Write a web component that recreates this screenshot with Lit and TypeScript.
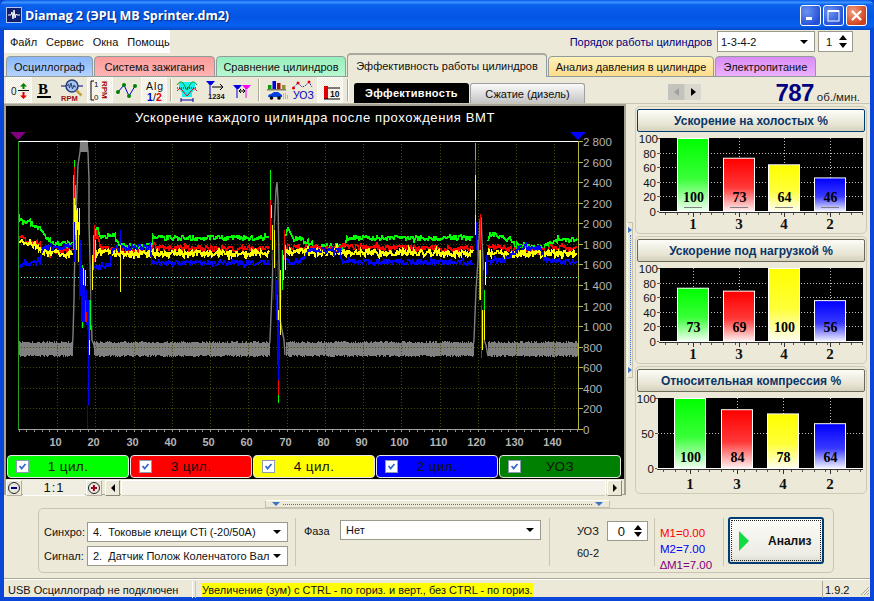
import { LitElement, html, css, svg } from 'lit';
import { customElement, property } from 'lit/decorators.js';

// small seeded random so that the traces come out the same on every load
let seed = 12345;
const rnd = () => {
  seed = (seed * 1664525 + 1013904223) % 4294967296;
  return seed / 4294967296;
};

type Pt = [number, number];

const lerp = (pts: Pt[], x: number) => {
  for (let i = 1; i < pts.length; i++) {
    if (x <= pts[i][0]) {
      const [x0, y0] = pts[i - 1];
      const [x1, y1] = pts[i];
      return y0 + ((y1 - y0) * (x - x0)) / (x1 - x0 || 1);
    }
  }
  return pts[pts.length - 1][1];
};

// the three crank pulses, where the regular noise gives way to the spikes
const GAPS: Pt[] = [
  [73, 93],
  [270, 285],
  [474, 487],
];
const inGap = (x: number) => GAPS.some(([a, b]) => x >= a && x <= b);

const trace = (keys: Pt[], amp: number) => {
  const parts: string[] = [];
  let cur: string[] = [];
  for (let x = 19; x <= 577; x++) {
    if (inGap(x)) {
      if (cur.length) parts.push(cur.join(' '));
      cur = [];
      continue;
    }
    const kick = rnd() < 0.12 ? (rnd() - 0.5) * 8 : 0;
    const y = lerp(keys, x) + (rnd() - 0.5) * 2 * amp + kick;
    cur.push(`${x},${Math.round(y)}`);
  }
  if (cur.length) parts.push(cur.join(' '));
  return parts;
};

const TRACES: { color: string; width: number; parts: string[] }[] = [
  {
    color: '#00ff00',
    width: 1.6,
    parts: trace(
      [[19, 218], [30, 222], [40, 228], [47, 238], [52, 243], [72, 243], [94, 240], [97, 226], [100, 237], [115, 235], [118, 246], [152, 246], [153, 238], [270, 238], [286, 236], [288, 228], [292, 238], [300, 239], [315, 246], [345, 246], [347, 238], [473, 238], [488, 240], [490, 234], [510, 240], [520, 247], [545, 247], [555, 240], [578, 240]],
      2.4,
    ),
  },
  {
    color: '#ff0000',
    width: 1.6,
    parts: trace(
      [[19, 238], [40, 244], [42, 252], [72, 250], [94, 245], [97, 232], [100, 247], [115, 250], [118, 252], [152, 250], [153, 245], [160, 248], [270, 249], [290, 247], [340, 249], [345, 244], [348, 247], [473, 249], [490, 246], [510, 249], [520, 252], [545, 251], [550, 247], [578, 249]],
      2.6,
    ),
  },
  {
    color: '#ffff00',
    width: 2.2,
    parts: trace(
      [[19, 241], [40, 246], [42, 252], [72, 254], [94, 254], [100, 251], [115, 254], [152, 254], [270, 253], [290, 252], [578, 254]],
      3.2,
    ),
  },
  {
    color: '#0000ff',
    width: 1.6,
    parts: trace(
      [[19, 266], [25, 264], [40, 263], [42, 250], [50, 247], [72, 246], [94, 268], [100, 265], [110, 265], [113, 248], [150, 247], [152, 263], [270, 263], [285, 262], [300, 262], [310, 250], [340, 250], [342, 262], [473, 262], [490, 262], [505, 260], [520, 248], [540, 248], [545, 260], [578, 262]],
      2.6,
    ),
  },
];

// the grey band around 800, one column per pixel
const GREY_BAND = (() => {
  const out: string[] = [];
  for (let x = 19; x <= 577; x++) {
    if (inGap(x)) continue;
    const top = Math.round(341 + rnd() * 2.5);
    const bot = Math.round(355 + rnd() * 2);
    out.push(`M${x + 0.5} ${top}V${bot}`);
  }
  return out.join('');
})();

const GREY_PULSES: string[] = [
  '72,356 73,335 74,300 75,240 77,190 78,165 80,152 81,141 87,141 88,152 89,180 89,223 91,300 92,340 94,345 96,356',
  '268,355 270,340 272,290 274,230 276,190 277,182 278,200 279,260 280,320 284,340 285,355',
  '472,355 474,340 476,290 478,260 480,220 481,217 482,240 483,260 484,340 486,345 488,356',
];

// [x, y1, y2, colour]
type Seg = [number, number, number, string];
const G = '#00ff00';
const R = '#ff0000';
const Y = '#ffff00';
const B = '#0000ff';
const SPIKES: Seg[] = [
  [73, 175, 250, G], [74, 160, 250, G], [74, 167, 220, R], [74, 198, 240, Y], [74, 222, 262, B],
  [75, 185, 240, G], [75, 205, 235, Y], [76, 210, 250, Y], [77, 208, 252, Y], [77, 230, 265, B],
  [78, 222, 262, Y], [79, 208, 250, Y], [79, 235, 300, B], [80, 240, 296, B],
  [81, 260, 326, B], [82, 265, 328, G], [82, 268, 322, B], [83, 268, 285, Y], [83, 285, 326, B],
  [84, 270, 322, B], [85, 270, 286, Y], [85, 300, 322, R], [86, 290, 325, B],
  [86, 312, 322, R], [87, 300, 330, B], [88, 330, 405, B], [87, 405, 430, B], [88, 300, 330, B],
  [89, 320, 355, Y], [89, 300, 340, R], [90, 300, 330, G], [91, 265, 325, B],
  [92, 255, 290, Y], [93, 235, 270, G], [94, 225, 262, R], [95, 240, 262, Y],
  [120, 230, 262, B], [120, 245, 292, Y],
  [270, 170, 240, G], [270, 200, 240, R], [271, 205, 240, Y], [271, 218, 260, B],
  [272, 225, 250, Y], [273, 220, 300, B], [274, 230, 268, Y], [275, 240, 300, B],
  [276, 280, 320, B], [277, 260, 365, B], [277, 295, 320, R], [278, 310, 325, Y],
  [278, 320, 403, B], [278, 380, 403, R], [278, 395, 403, G], [279, 330, 360, B],
  [280, 270, 335, Y], [281, 250, 300, B], [282, 250, 290, G], [283, 255, 280, Y],
  [284, 230, 260, R], [285, 245, 270, Y],
  [475, 143, 170, G], [475, 160, 175, R], [475, 175, 200, Y], [475, 200, 215, G],
  [475, 215, 235, Y], [476, 222, 250, B], [477, 240, 258, R], [479, 250, 300, G],
  [480, 214, 260, R], [480, 250, 300, Y], [481, 250, 345, B], [481, 305, 358, R],
  [482, 310, 350, Y], [483, 270, 345, B], [484, 290, 330, G], [484, 310, 340, Y],
  [485, 262, 285, '#ffffff'], [486, 255, 275, B],
];

const Y_TICKS = [2800, 2600, 2400, 2200, 2000, 1800, 1600, 1400, 1200, 1000, 800, 600, 400, 200, 0];
const yFor = (v: number) => Math.round(429 - (v / 2800) * 288);
const fmt = (v: number) => (v >= 1000 ? `${Math.floor(v / 1000)} ${String(v % 1000).padStart(3, '0')}` : String(v));

@customElement('scope-chart')
export class ScopeChart extends LitElement {
  static styles = css`
    :host {
      display: block;
      height: 349px;
    }
    svg {
      display: block;
    }
    .title {
      font: 13px 'Liberation Sans', sans-serif;
      fill: #fff;
      letter-spacing: 0.6px;
    }
    .ylab {
      font: 11.5px 'Liberation Sans', sans-serif;
      fill: #b4b4b4;
    }
    .xlab {
      font: bold 11px 'Liberation Sans', sans-serif;
      fill: #b4b4b4;
      text-anchor: middle;
    }
  `;

  render() {
    const vgrid: number[] = [];
    for (let i = 0; i < 14; i++) vgrid.push(Math.round(57 + i * 38.25));
    const minor: number[] = [];
    for (let x = 18.75; x < 578; x += 7.65) minor.push(Math.round(x) + 0.5);
    return html`<svg width="618" height="349" viewBox="6 106 618 349">
      <rect x="6" y="106" width="618" height="349" fill="#000"></rect>
      <text class="title" x="135" y="122">Ускорение каждого цилиндра после прохождения ВМТ</text>
      <polygon points="10,132 26,132 18,140" fill="#800080"></polygon>
      <polygon points="570,132 586,132 578,140" fill="#0000ff"></polygon>

      <path d=${GREY_BAND} stroke="#808080" stroke-width="1" fill="none" shape-rendering="crispEdges"></path>
      ${Y_TICKS.slice(1, -1).map(
        (v) => svg`<line x1="18" x2="578" y1=${yFor(v) + 0.5} y2=${yFor(v) + 0.5} stroke="#4a4a00" stroke-dasharray="1 2"></line>`,
      )}
      ${vgrid.map(
        (x) => svg`<line x1=${x + 0.5} x2=${x + 0.5} y1="141" y2="429" stroke="#4a4a00" stroke-dasharray="1 2"></line>`,
      )}
      <line x1="18" x2="578" y1="277.5" y2="277.5" stroke="#40ffff" stroke-dasharray="1 2"></line>

      ${GREY_PULSES.map(
        (p) => svg`<polyline points=${p} fill="none" stroke="#808080" stroke-width="1.4"></polyline>`,
      )}
      <rect x="80" y="141" width="8" height="11" fill="#808080"></rect>
      ${TRACES.map((t) =>
        t.parts.map(
          (p) => svg`<polyline points=${p} fill="none" stroke=${t.color} stroke-width=${t.width} shape-rendering="crispEdges"></polyline>`,
        ),
      )}
      ${SPIKES.map(
        ([x, a, b, c]) => svg`<line x1=${x + 0.5} x2=${x + 0.5} y1=${a} y2=${b} stroke=${c} stroke-width="1.6" shape-rendering="crispEdges"></line>`,
      )}
      <line x1="18" x2="578" y1="141.5" y2="141.5" stroke="#fff"></line>
      <line x1="18.5" x2="18.5" y1="141" y2="430" stroke="#20a020"></line>
      <line x1="18" x2="578" y1="429.5" y2="429.5" stroke="#a0a0a0"></line>
      <line x1="578.5" x2="578.5" y1="141" y2="430" stroke="#b8b840"></line>
      ${Y_TICKS.map(
        (v) => svg`
          <line x1="579" x2="583" y1=${yFor(v) + 0.5} y2=${yFor(v) + 0.5} stroke="#b8b840"></line>
          <text class="ylab" x="583" y=${yFor(v) + 4.5}>${fmt(v)}</text>`,
      )}
      ${minor.map(
        (x) => svg`<line x1=${x} x2=${x} y1="430" y2="432" stroke="#909090"></line>`,
      )}
      ${vgrid.map(
        (x, i) => svg`<text class="xlab" x=${x - 1.5} y="446">${(i + 1) * 10}</text>`,
      )}
    </svg>`;
  }
}

const BAR_IDS = ['green', 'red', 'yellow', 'blue'];

@customElement('bar-chart')
export class BarChart extends LitElement {
  @property({ type: Array }) values: number[] = [];
  @property({ type: Array }) ticks: number[] = [];
  @property({ type: Array }) centers: number[] = [];
  @property({ type: Number }) plotLeft = 25;
  @property({ type: Number }) plotBottom = 78;
  @property({ type: Number }) valueLift = 9;
  @property({ type: Boolean }) dash = false;

  static styles = css`
    :host {
      display: block;
      margin-left: -2px;
    }
    svg {
      display: block;
    }
    .tick {
      font: 11.5px 'Liberation Sans', sans-serif;
      fill: #111;
      text-anchor: end;
    }
    .val {
      font: bold 14px 'Liberation Serif', serif;
      fill: #000;
      text-anchor: middle;
    }
    .cat {
      font: bold 15px 'Liberation Serif', serif;
      fill: #111;
      text-anchor: middle;
    }
  `;

  render() {
    const cats = ['1', '3', '4', '2'];
    const top = 5;
    const bottom = this.plotBottom;
    const h = bottom - top;
    const minor: number[] = [];
    for (let x = this.plotLeft + 5; x < 228; x += 11.6) minor.push(Math.round(x) + 0.5);
    return html`<svg width="232" height="100" viewBox="0 0 232 100">
      <defs>
        ${Object.entries({ green: '#00ff00', red: '#ff0000', yellow: '#ffff00', blue: '#0000ff' }).map(
          ([id, c]) => svg`<linearGradient id=${id} x1="0" y1="0" x2="0" y2="1">
            <stop offset="0" stop-color=${c}></stop>
            <stop offset="0.55" stop-color=${c} stop-opacity="0.78"></stop>
            <stop offset="1" stop-color=${c} stop-opacity="0.06"></stop>
          </linearGradient>`,
        )}
      </defs>
      <rect x=${this.plotLeft} y=${top} width=${228 - this.plotLeft} height=${h} fill="#000"></rect>
      ${this.ticks.map((t) => {
        const y = Math.round(bottom - (t / 100) * h) + 0.5;
        return svg`
          ${t > 0 && t < 100
            ? svg`<line x1=${this.plotLeft} x2="228" y1=${y} y2=${y} stroke="#c0c0c0" stroke-dasharray="1 2"></line>`
            : ''}
          <line x1=${this.plotLeft - 3} x2=${this.plotLeft} y1=${y} y2=${y} stroke="#555"></line>
          <text class="tick" x=${t === 100 ? this.plotLeft - 2 : this.plotLeft - 4} y=${y + 4}>${t}</text>`;
      })}
      ${this.centers.map(
        (c) => svg`<line x1=${c + 0.5} x2=${c + 0.5} y1=${top} y2=${bottom} stroke="#c0c0c0" stroke-dasharray="1 2"></line>`,
      )}
      ${this.values.map((v, i) => {
        const barH = (v / 100) * h;
        const x = this.centers[i] - 16;
        return svg`
          <rect x=${x} y=${bottom - barH} width="32" height=${barH} fill="#fff"></rect>
          <rect x=${x + 1} y=${bottom - barH + 1} width="30" height=${barH - 1} fill=${`url(#${BAR_IDS[i]})`}></rect>
          ${this.dash ? svg`<rect x=${x + 7} y=${bottom - 4} width="18" height="1" fill="#808080"></rect>` : ''}
          <text class="val" x=${this.centers[i] + 0.5} y=${bottom - this.valueLift}>${v}</text>`;
      })}
      <line x1=${this.plotLeft - 1} x2="228" y1=${bottom + 0.5} y2=${bottom + 0.5} stroke="#fff"></line>
      <line x1=${this.plotLeft - 1} x2="228" y1=${bottom + 1.5} y2=${bottom + 1.5} stroke="#333"></line>
      ${minor.map(
        (x) => svg`<line x1=${x} x2=${x} y1=${bottom + 2} y2=${bottom + 4} stroke="#555"></line>`,
      )}
      ${cats.map(
        (c, i) => svg`
          <line x1=${this.centers[i] + 0.5} x2=${this.centers[i] + 0.5} y1=${bottom + 2} y2=${bottom + 6} stroke="#333"></line>
          <text class="cat" x=${this.centers[i]} y="96">${c}</text>`,
      )}
    </svg>`;
  }
}

const iconText = (x: number, y: number, text: string, size: number, fill: string, weight = 'normal') =>
  svg`<text x=${x} y=${y} font-size=${size} fill=${fill} font-weight=${weight} font-family="Liberation Sans, sans-serif">${text}</text>`;

const funnel = (x: number, y: number, c: string) =>
  svg`<path d="M${x - 4} ${y}h9l-3.500 4h-1V${y + 13}h-1V${y + 4}z" fill=${c}></path>`;

// toolbar pictures, each drawn in a 26x26 box
const ICONS = [
  svg`${iconText(5, 18, '0', 10, '#111')}
    <rect x="12" y="13" width="11" height="1" fill="#111"></rect>
    <path d="M17.500 6l3.500 3.500h-2.500V12h-2V9.500H14z" fill="#008000"></path>
    <path d="M17.500 22l3.500-3.500h-2.500V15h-2v3.500H14z" fill="#e00000"></path>`,
  svg`<text x="5" y="17" font-size="15" font-weight="bold" fill="#000" font-family="Liberation Serif, serif">B</text>
    <rect x="4" y="19" width="14" height="2" fill="#000"></rect>`,
  svg`<path d="M1 9h5M18 9h5" stroke="#000080"></path>
    <circle cx="12" cy="9" r="6" fill="#a8c4ec" stroke="#24407c" stroke-width="1.5"></circle>
    <path d="M7 9l1.500-2 1 4 1.500-5 1.500 6 1.500-4 1 2h1" fill="none" stroke="#24407c"></path>
    <path d="M16.500 13.500l5 5" stroke="#c8a040" stroke-width="2.500"></path>
    ${iconText(1, 24, 'RPM', 7.5, '#a01010', 'bold')}`,
  svg`<path d="M7 4H4v19h3" fill="none" stroke="#000"></path>
    ${iconText(7, 10, '1', 8, '#111')}${iconText(7, 23, '0', 8, '#111')}
    <text transform="translate(15 4) rotate(90)" font-size="8" font-weight="bold" fill="#a01010" font-family="Liberation Sans, sans-serif">RPM</text>`,
  svg`<path d="M4 15l6-7 5 11 6-10" fill="none" stroke="#0000e0"></path>
    <circle cx="4" cy="15" r="2" fill="#008000"></circle><circle cx="10" cy="8" r="2" fill="#008000"></circle>
    <circle cx="15" cy="19" r="2" fill="#008000"></circle><circle cx="21" cy="9" r="2" fill="#008000"></circle>`,
  svg`<text x="5" y="13" font-size="10.5" fill="#111" letter-spacing="1" font-family="Liberation Sans, sans-serif">Alg</text>
    ${iconText(6, 24, '1', 10.5, '#0000c0', 'bold')}${iconText(12, 24, '/', 10.5, '#111')}${iconText(15, 24, '2', 10.5, '#e00000', 'bold')}`,
  svg`<path d="M5 5h16v6l-3 5v4H8v-4l-3-5z" fill="#18f0f0"></path>
    <path d="M3 8q3-5 6-2l4 7 4-7q3-3 6 2" fill="none" stroke="#10a020"></path>
    <path d="M3 14q3-4 5-1l5 6 5-6q2-3 5 1" fill="none" stroke="#d01010"></path>
    <path d="M3 11h20" stroke="#000" stroke-dasharray="1 1"></path>
    <path d="M7 23h12M7 21v4M19 21v4" stroke="#0000a0"></path>`,
  svg`${funnel(9, 4, '#0000e0')}
    <path d="M11 10h11m-3-3l3 3-3 3" fill="none" stroke="#000"></path>
    ${iconText(7, 22, '1234', 7.5, '#111', 'bold')}`,
  svg`${funnel(9, 8, '#0000e0')}${funnel(18, 8, '#ff00ff')}
    <path d="M11 14h6m-4-2l-2 2 2 2m2-4l2 2-2 2" fill="none" stroke="#000"></path>`,
  svg`<rect x="5" y="8" width="3.500" height="4" fill="#00a000"></rect><rect x="9.500" y="4" width="3.500" height="8" fill="#0000e0"></rect>
    <rect x="14" y="6" width="3.500" height="6" fill="#a01010"></rect><rect x="19" y="8" width="3.500" height="4" fill="#909030"></rect>
    <rect x="4" y="12" width="19" height="1.500" fill="#808060"></rect>
    <path d="M5 20q0-3 3-3l3-2h4l4 3v2H5z" fill="#0040e0"></path>
    <circle cx="8.500" cy="21" r="1.800" fill="#000"></circle><circle cx="16" cy="21" r="1.800" fill="#000"></circle>
    <path d="M20 17h4M20 19h5M20 21h5" stroke="#888" stroke-dasharray="1 1"></path>`,
  svg`<path d="M3 11l5-5 4 4 3-1 4-4 3 5" fill="none" stroke="#0000c0" stroke-dasharray="1 1"></path>
    <circle cx="3.500" cy="11" r="1.500" fill="#e00000"></circle><circle cx="8" cy="6" r="1.500" fill="#e00000"></circle>
    <circle cx="19" cy="5" r="1.500" fill="#e00000"></circle>
    ${iconText(3, 22, 'УОЗ', 10.5, '#0000c0')}`,
  svg`<rect x="7" y="9" width="4" height="13" fill="#e00000"></rect>
    <path d="M7 22h16M11 11h12" stroke="#000"></path>
    ${iconText(13, 20, '10', 8.5, '#111', 'bold')}`,
];

const TABS = [
  { label: 'Осциллограф', cls: 'blue', width: 87 },
  { label: 'Система зажигания', cls: 'red', width: 121 },
  { label: 'Сравнение цилиндров', cls: 'green', width: 130 },
  { label: 'Эффективность работы цилиндров', cls: 'active', width: 200 },
  { label: 'Анализ давления в цилиндре', cls: 'amber', width: 166 },
  { label: 'Электропитание', cls: 'violet', width: 101 },
];

const CHANNELS = [
  { label: '1 цил.', cls: 'c-green' },
  { label: '3 цил.', cls: 'c-red' },
  { label: '4 цил.', cls: 'c-yellow' },
  { label: '2 цил.', cls: 'c-blue' },
  { label: 'УОЗ', cls: 'c-dark' },
];

const PANELS = [
  { title: 'Ускорение на холостых %', values: [100, 73, 64, 46], ticks: [100, 80, 60, 40, 20, 0], left: 25, bottom: 78, lift: 9, centers: [58, 104, 149, 195], dash: true },
  { title: 'Ускорение под нагрузкой %', values: [73, 69, 100, 56], ticks: [100, 80, 60, 40, 20, 0], left: 25, bottom: 78, lift: 9, centers: [58, 104, 149, 195], dash: false },
  { title: 'Относительная компрессия %', values: [100, 84, 78, 64], ticks: [100, 50, 0], left: 23, bottom: 75, lift: 6, centers: [55, 102, 148, 195], dash: false },
];

@customElement('app-root')
export class AppRoot extends LitElement {
  static styles = css`
    :host {
      display: block;
      width: 874px;
      height: 601px;
      overflow: hidden;
      font: 11px 'Liberation Sans', Arial, sans-serif;
      color: #111;
      background: #0a46d8;
    }
    * {
      box-sizing: border-box;
    }
    .titlebar {
      height: 30px;
      display: flex;
      align-items: center;
      padding: 0 7px 0 6px;
      background: linear-gradient(#0a5ae8 0, #3a93ff 8%, #0a60ec 16%, #0555e4 55%, #0660f0 85%, #0348c8 100%);
      border-radius: 7px 7px 0 0;
    }
    .app-icon {
      width: 16px;
      height: 16px;
      flex: none;
    }
    .caption {
      flex: 1;
      margin-left: 3px;
      color: #fff;
      font: bold 12.5px 'Open Sans', 'Liberation Sans', sans-serif;
      text-shadow: 1px 1px 1px #0a2a80;
      white-space: nowrap;
    }
    .winbtn {
      width: 21px;
      height: 21px;
      border: 1px solid #fff;
      border-radius: 3px;
      background: radial-gradient(circle at 30% 30%, #6c94f0, #2450d8 75%);
      display: flex;
      align-items: center;
      justify-content: center;
      margin-left: 2px;
    }
    .winbtn.close {
      background: radial-gradient(circle at 30% 30%, #f0a080, #d0401c 75%);
    }
    .client {
      height: 567px;
      margin: 0 4px;
      background: #ece9d8;
      display: flex;
      flex-direction: column;
    }

    /* menu */
    .menurow {
      height: 24px;
      flex: none;
      display: flex;
      align-items: flex-start;
      padding-right: 17px;
    }
    .menu {
      width: 166px;
      height: 23px;
      background: #fff;
      display: flex;
      align-items: center;
      gap: 9px;
      padding-left: 6px;
      white-space: nowrap;
    }
    .order {
      margin-left: auto;
      display: flex;
      align-items: center;
      height: 23px;
      color: #000080;
    }
    .order span {
      margin-right: 5px;
    }
    .combo {
      background: #fff;
      border: 1px solid #9a9a8c;
      display: flex;
      align-items: center;
      justify-content: space-between;
      padding: 0 6px 0 3px;
      white-space: nowrap;
      overflow: hidden;
    }
    .combo i {
      width: 0;
      height: 0;
      flex: none;
      border: 4px solid transparent;
      border-top: 4px solid #000;
      border-bottom: 0;
      margin-left: 4px;
    }
    .combo.order-combo {
      width: 98px;
      height: 21px;
      color: #111;
    }
    .spin {
      background: #fff;
      border: 1px solid #9a9a8c;
      display: flex;
      align-items: center;
      justify-content: space-between;
      padding: 0 5px 0 7px;
      color: #111;
    }
    .spin.order-spin {
      width: 35px;
      height: 21px;
      margin-left: 3px;
    }
    .arrows {
      display: flex;
      flex-direction: column;
      gap: 3px;
    }
    .arrows i {
      width: 0;
      height: 0;
      border: 4px solid transparent;
      border-top: 0;
      border-bottom: 5px solid #000;
    }
    .arrows i + i {
      border-bottom: 0;
      border-top: 5px solid #000;
    }

    /* page tabs */
    .tabs {
      height: 23px;
      flex: none;
      display: flex;
      align-items: flex-end;
      padding: 0 2px;
      gap: 1px;
      border-bottom: 1px solid #919b9c;
    }
    .tab {
      height: 21px;
      margin-bottom: -1px;
      border: 1px solid #919b9c;
      border-radius: 4px 4px 0 0;
      display: flex;
      align-items: center;
      justify-content: center;
      white-space: nowrap;
      flex: none;
    }
    .tab.blue {
      background: linear-gradient(#8ab8fa, #b4d2ff);
    }
    .tab.red {
      background: linear-gradient(#fc9c9c, #ffb4b4);
    }
    .tab.green {
      background: linear-gradient(#98efbc, #b6f8d0);
    }
    .tab.amber {
      background: linear-gradient(#fff2b8, #fedc8c);
    }
    .tab.violet {
      background: linear-gradient(#d98cf4, #ecb0ff);
    }
    .tab.active {
      height: 24px;
      background: #ece9d8;
      border-bottom: 0;
      border-top: 2px solid #a8a89c;
      position: relative;
      z-index: 1;
    }

    /* toolbar */
    .toolbar {
      height: 27px;
      flex: none;
      display: flex;
      align-items: flex-start;
      padding: 0 10px 0 2px;
      border-bottom: 1px solid #c8c5b4;
    }
    .tool {
      width: 26px;
      height: 26px;
      margin-right: 1px;
      flex: none;
    }
    .tool.on {
      background: repeating-conic-gradient(#fff 0 25%, #ece9d8 0 50%) 0 0 / 2px 2px;
      border: 1px solid #fbfaf4;
    }
    .tool svg {
      display: block;
      width: 26px;
      height: 26px;
    }
    .tool.on svg {
      margin: -1px;
    }
    .sep {
      width: 2px;
      height: 22px;
      flex: none;
      margin: 2px 3px 0 3px;
      border-left: 1px solid #aca899;
      border-right: 1px solid #fff;
    }
    .sep.tight {
      margin: 2px 2px 0 2px;
    }
    .sub {
      height: 20px;
      margin-top: 6px;
      width: 115px;
      display: flex;
      align-items: center;
      justify-content: center;
      white-space: nowrap;
      border-radius: 3px 3px 0 0;
      flex: none;
    }
    .sub.on {
      background: #000;
      color: #fff;
      font-weight: bold;
      letter-spacing: 0.3px;
      margin-left: 2px;
    }
    .sub.off {
      background: linear-gradient(#fafafa, #c4c4c4);
      border: 1px solid #a0a0a0;
      border-bottom: 0;
      margin-left: 1px;
    }
    .nav {
      margin: 7px 0 0 83px;
      width: 33px;
      height: 16px;
      display: flex;
      flex: none;
      background: #d4d0c8;
      gap: 1px;
    }
    .nav b {
      flex: 1;
      display: flex;
      align-items: center;
      justify-content: center;
      background: #dad8ce;
    }
    .nav i {
      width: 0;
      height: 0;
      border: 4px solid transparent;
      border-left: 5px solid #000;
      border-right: 0;
    }
    .nav b:first-child {
      background: #c4c2bc;
    }
    .nav b:first-child i {
      border-left: 0;
      border-right: 5px solid #a0a0a0;
    }
    .rpm {
      margin-left: auto;
      display: flex;
      align-items: baseline;
      gap: 3px;
      color: #222;
      white-space: nowrap;
      margin-top: 2px;
      font-size: 11.5px;
    }
    .rpm b {
      font-size: 24px;
      line-height: 27px;
      letter-spacing: -0.6px;
      color: #000080;
    }

    /* main area */
    .main {
      height: 391px;
      flex: none;
      display: flex;
    }
    .left {
      width: 622px;
      flex: none;
      border-left: 2px solid #a5a294;
      border-top: 2px solid #a5a294;
      border-right: 2px solid #a5a294;
      border-bottom: 1px solid #a5a294;
      background: #ece9d8;
      display: flex;
      flex-direction: column;
    }
    .channels {
      height: 24px;
      flex: none;
      background: #000;
      display: flex;
      gap: 1px;
      padding: 0 0 1px 1px;
    }
    .chan {
      width: 122px;
      flex: none;
      border: 1px solid #e8e8e8;
      border-radius: 4px;
      display: flex;
      align-items: center;
      padding-left: 8px;
      font-size: 13.5px;
      letter-spacing: 0.4px;
    }
    .chan span {
      flex: 1;
      text-align: center;
      padding-right: 21px;
    }
    .c-green {
      background: #00ff00;
    }
    .c-red {
      background: #ff0000;
    }
    .c-yellow {
      background: #ffff00;
    }
    .c-blue {
      background: #0000ff;
    }
    .c-dark {
      background: #008000;
    }
    .check {
      width: 13px;
      height: 13px;
      flex: none;
      background: #fff;
      border: 1px solid #8c9cb4;
      display: block;
    }
    .zoomrow {
      flex: 1;
      display: flex;
      align-items: stretch;
      padding: 1px 2px 0 0;
      gap: 1px;
    }
    .round {
      width: 16px;
      flex: none;
      display: flex;
      align-items: center;
      justify-content: center;
      background: #ece9d8;
      border: 1px solid #fff;
      border-right-color: #b4b1a0;
      border-bottom-color: #b4b1a0;
    }
    .ratio {
      width: 62px;
      flex: none;
      display: flex;
      align-items: center;
      justify-content: center;
      font-size: 13px;
      letter-spacing: 1px;
      background: #f0eee0;
      border-bottom: 1px solid #fff;
    }
    .sb-btn {
      width: 15px;
      flex: none;
      display: flex;
      align-items: center;
      justify-content: center;
      background: #ece9d8;
      border: 1px solid #fff;
      border-right-color: #8a8778;
      border-bottom-color: #8a8778;
    }
    .sb-btn i {
      width: 0;
      height: 0;
      border: 4px solid transparent;
      border-left: 4px solid #000;
      border-right: 0;
    }
    .sb-btn.back {
      margin-left: 2px;
    }
    .sb-btn.back i {
      border-left: 0;
      border-right: 4px solid #000;
    }
    .sb-track {
      flex: 1;
      background: #f4f2e8;
      border: 1px solid #fff;
      border-bottom-color: #d0cdbc;
    }
    .vsplit {
      width: 6px;
      height: 156px;
      flex: none;
      align-self: center;
      margin-left: 1px;
      background: #ece9d8;
      border: 1px solid #c4c1b0;
      border-left-color: #fff;
      display: flex;
      flex-direction: column;
      align-items: center;
      justify-content: space-between;
      padding: 4px 0;
    }
    .vsplit i {
      width: 0;
      height: 0;
      border: 3px solid transparent;
      border-left: 4px solid #3c74c8;
      border-right: 0;
    }
    .vsplit u {
      flex: 1;
      margin: 2px 0;
      border-left: 1px dotted #3c74c8;
    }
    .panels {
      width: 232px;
      margin-left: 2px;
      padding-top: 2px;
      flex: none;
      display: flex;
      flex-direction: column;
      gap: 2px;
    }
    .panel {
      height: 128px;
      border: 1px solid #cdcab8;
      border-radius: 5px;
      padding: 2px 1px 0;
    }
    .panel-title {
      height: 23px;
      width: 228px;
      margin: 0 0 1px 0;
      border: 1px solid #6b6a58;
      border-radius: 2px;
      background: linear-gradient(#fdfdf8, #e6e3d2 70%, #d4d1bd);
      display: flex;
      align-items: center;
      justify-content: center;
      font-weight: bold;
      font-size: 12px;
      color: #0a3568;
    }
    .panel-title.focus {
      border-color: #003c74;
    }

    /* lower controls */
    .hsplit {
      width: 345px;
      height: 8px;
      margin: 5px auto 0;
      flex: none;
      background: #ece9d8;
      border: 1px solid #c4c1b0;
      border-top-color: #fff;
      display: flex;
      align-items: center;
      padding: 0 6px;
    }
    .hsplit i {
      width: 0;
      height: 0;
      flex: none;
      border: 4px solid transparent;
      border-top: 4px solid #3c74c8;
      border-bottom: 0;
    }
    .hsplit u {
      flex: 1;
      margin: 0 3px;
      border-top: 1px dotted #3c74c8;
    }
    .group {
      width: 796px;
      height: 65px;
      margin: 0 0 0 34px;
      flex: none;
      border: 1px solid #c8c5b2;
      border-radius: 5px;
      display: flex;
      align-items: stretch;
    }
    .cell {
      border-right: 1px solid #c8c5b2;
      margin: 9px 0 6px;
      flex: none;
      display: flex;
    }
    .sync {
      width: 257px;
      flex-direction: column;
      gap: 4px;
      padding: 4px 0 0 5px;
    }
    .sync div {
      display: flex;
      align-items: center;
      gap: 4px;
    }
    .sync label {
      width: 39px;
      white-space: nowrap;
    }
    .sync .combo {
      width: 201px;
      height: 20px;
      padding-left: 5px;
    }
    .phase {
      width: 254px;
      padding: 2px 0 0 8px;
      align-items: flex-start;
    }
    .phase label {
      width: 36px;
      line-height: 22px;
    }
    .phase .combo {
      width: 201px;
      height: 20px;
      padding-left: 5px;
    }
    .uoz {
      width: 105px;
      padding: 3px 0 0 27px;
      flex-direction: column;
      gap: 6px;
    }
    .uoz div {
      display: flex;
      align-items: center;
      gap: 8px;
    }
    .spin.uoz-spin {
      width: 41px;
      height: 20px;
      padding: 0 5px 0 10px;
      justify-content: space-between;
      font-size: 13px;
    }
    .uoz-spin .arrows {
      gap: 2px;
    }
    .marks {
      width: 69px;
      padding: 8px 0 0 5px;
      flex-direction: column;
      gap: 2px;
      font-size: 11.5px;
      line-height: 14px;
      white-space: nowrap;
    }
    .m1 {
      color: #ff0000;
    }
    .m2 {
      color: #0000ff;
    }
    .m3 {
      color: #800080;
    }
    .run-wrap {
      padding: 8px 0 0 4px;
    }
    .run {
      width: 96px;
      height: 47px;
      border: 2px solid #003c74;
      border-radius: 3px;
      outline: 1px dotted #222;
      outline-offset: -4px;
      background: linear-gradient(#fcfcf8, #ecebe4 85%, #dcdad0);
      display: flex;
      align-items: center;
      padding-left: 9px;
      gap: 19px;
      font-weight: bold;
      font-size: 12px;
    }
    .run i {
      width: 0;
      height: 0;
      flex: none;
      border: 10px solid transparent;
      border-left: 10px solid #10dc40;
      border-right: 0;
    }

    /* status bar */
    .status {
      height: 20px;
      margin-top: 5px;
      flex: none;
      display: flex;
      border-top: 1px solid #aca899;
      box-shadow: inset 0 1px 0 #fff;
      padding-top: 2px;
      white-space: nowrap;
    }
    .st1 {
      width: 189px;
      flex: none;
      padding-left: 4px;
      display: flex;
      align-items: center;
      border-right: 1px solid #fff;
    }
    .st2 {
      flex: 1;
      margin-left: 2px;
      padding-left: 6px;
      display: flex;
      align-items: center;
      border-left: 1px solid #c8c5b2;
    }
    .st2 mark {
      background: #ffff00;
      color: #111;
      line-height: 14px;
    }
    .st3 {
      width: 48px;
      flex: none;
      padding-left: 2px;
      display: flex;
      align-items: center;
      border-left: 1px solid #aca899;
    }
    .grip {
      margin-left: auto;
    }
  `;

  private checkbox() {
    return html`<svg class="check" viewBox="0 0 13 13" width="13" height="13">
      <path d="M3 6l2.500 3L10 3.500" fill="none" stroke="#3068d0" stroke-width="2"></path>
    </svg>`;
  }

  render() {
    const tools = [0, 1, 2, 3, 4, 5, -1, 6, 7, 8, -2, 9, 10, 11, -2];
    const pressed = [0, 3, 5, 11];
    return html`
      <div class="titlebar">
        <svg class="app-icon" viewBox="0 0 16 16">
          <rect width="16" height="16" fill="#10206c"></rect>
          <rect x="0.500" y="0.500" width="15" height="15" fill="none" stroke="#b4c4ec"></rect>
          <path d="M2 8h3l1-3 1 7 1-9 1 8 1-4 1 1h3" fill="none" stroke="#fff"></path>
        </svg>
        <div class="caption">Diamag 2 (ЭРЦ MB Sprinter.dm2)</div>
        <div class="winbtn">
          <svg width="11" height="11" viewBox="0 0 11 11"><rect x="1" y="7" width="6" height="3" fill="#fff"></rect></svg>
        </div>
        <div class="winbtn">
          <svg width="13" height="13" viewBox="0 0 13 13"><rect x="1" y="2" width="11" height="10" fill="none" stroke="#fff"></rect><rect x="1" y="1" width="11" height="2" fill="#fff"></rect></svg>
        </div>
        <div class="winbtn close">
          <svg width="13" height="13" viewBox="0 0 13 13"><path d="M2 2l9 9M11 2l-9 9" stroke="#fff" stroke-width="2.200"></path></svg>
        </div>
      </div>

      <div class="client">
        <div class="menurow">
          <div class="menu"><span>Файл</span><span>Сервис</span><span>Окна</span><span>Помощь</span></div>
          <div class="order">
            <span>Порядок работы цилиндров</span>
            <div class="combo order-combo">1-3-4-2<i></i></div>
            <div class="spin order-spin">1<div class="arrows"><i></i><i></i></div></div>
          </div>
        </div>

        <div class="tabs">
          ${TABS.map((t) => html`<div class="tab ${t.cls}" style="width:${t.width}px">${t.label}</div>`)}
        </div>

        <div class="toolbar">
          ${tools.map((t) =>
            t >= 0
              ? html`<div class="tool ${pressed.includes(t) ? 'on' : ''}"><svg viewBox="0 0 26 26">${ICONS[t]}</svg></div>`
              : html`<div class="sep ${t === -1 ? 'tight' : ''}"></div>`,
          )}
          <div class="sub on">Эффективность</div>
          <div class="sub off">Сжатие (дизель)</div>
          <div class="nav"><b><i></i></b><b><i></i></b></div>
          <div class="rpm"><b>787</b><span>об./мин.</span></div>
        </div>

        <div class="main">
          <div class="left">
            <scope-chart></scope-chart>
            <div class="channels">
              ${CHANNELS.map(
                (c) => html`<div class="chan ${c.cls}">${this.checkbox()}<span>${c.label}</span></div>`,
              )}
            </div>
            <div class="zoomrow">
              <div class="round">
                <svg width="14" height="14" viewBox="0 0 14 14"><circle cx="7" cy="7" r="5.500" fill="#e8e8e0" stroke="#222"></circle><rect x="4" y="6" width="6" height="2" fill="#000080"></rect></svg>
              </div>
              <div class="ratio">1:1</div>
              <div class="round">
                <svg width="14" height="14" viewBox="0 0 14 14"><circle cx="7" cy="7" r="5.500" fill="#e8e8e0" stroke="#222"></circle><path d="M4 7h6M7 4v6" stroke="#a00020" stroke-width="2"></path></svg>
              </div>
              <div class="sb-btn back"><i></i></div>
              <div class="sb-track"></div>
              <div class="sb-btn"><i></i></div>
            </div>
          </div>
          <div class="vsplit"><i></i><u></u><i></i></div>
          <div class="panels">
            ${PANELS.map(
              (p, i) => html`<div class="panel">
                <div class="panel-title ${i === 0 ? 'focus' : ''}">${p.title}</div>
                <bar-chart
                  .values=${p.values}
                  .ticks=${p.ticks}
                  .centers=${p.centers}
                  .plotLeft=${p.left}
                  .plotBottom=${p.bottom}
                  .valueLift=${p.lift}
                  .dash=${p.dash}
                ></bar-chart>
              </div>`,
            )}
          </div>
        </div>

        <div class="hsplit"><i></i><u></u><i></i></div>
        <div class="group">
          <div class="cell sync">
            <div><label>Синхро:</label><span class="combo">4.&nbsp; Токовые клещи CTi (-20/50A)<i></i></span></div>
            <div><label>Сигнал:</label><span class="combo">2.&nbsp; Датчик Полож Коленчатого Вал<i></i></span></div>
          </div>
          <div class="cell phase">
            <label>Фаза</label>
            <div class="combo">Нет<i></i></div>
          </div>
          <div class="cell uoz">
            <div><span>УОЗ</span><div class="spin uoz-spin">0<span class="arrows"><i></i><i></i></span></div></div>
            <span>60-2</span>
          </div>
          <div class="cell marks">
            <span class="m1">M1=0.00</span>
            <span class="m2">M2=7.00</span>
            <span class="m3">∆M1=7.00</span>
          </div>
          <div class="run-wrap">
            <div class="run"><i></i><span>Анализ</span></div>
          </div>
        </div>

        <div class="status">
          <div class="st1">USB Осциллограф не подключен</div>
          <div class="st2"><mark>Увеличение (зум) с CTRL - по гориз. и верт., без CTRL - по гориз.</mark></div>
          <div class="st3">1.9.2
            <svg class="grip" width="12" height="12" viewBox="0 0 12 12">
              <path d="M11 3l-8 8M11 6l-5 5M11 9l-2 2" stroke="#aca899"></path>
            </svg>
          </div>
        </div>
      </div>
    `;
  }
}
